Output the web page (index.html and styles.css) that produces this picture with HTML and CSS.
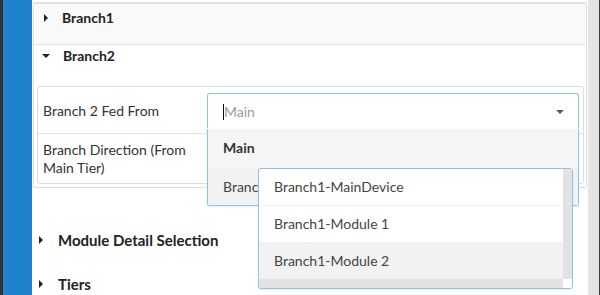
FILE: index.html
```html
<!DOCTYPE html>
<html lang="en">
  <head>
    <meta charset="UTF-8" />
    <meta name="viewport" content="width=device-width, initial-scale=1.0" />
    <title>Branch Setup</title>
    <link rel="stylesheet" href="styles.css">
  </head>
  <body>
    <div class="page">
      <div class="sidebar"></div>

      <div class="content">
        <div class="accordion">
          <div class="acc-head closed">
            <span class="caret-right"></span>Branch1
          </div>
          <div class="acc-head open">
            <span class="caret-down"></span>Branch2
          </div>
          <div class="acc-body">
            <div class="fields">
              <div class="field-row">
                <div class="field-label">Branch 2 Fed From</div>
                <div class="field-value">
                  <!-- Open select with its option list -->
                  <div class="select open">
                    <span class="cursor"></span><span class="placeholder">Main</span>
                    <span class="select-caret"></span>
                    <div class="select-menu">
                      <div class="option selected">Main</div>
                      <div class="option hovered">Branch1</div>
                      <!-- Sub menu for Branch1 -->
                      <div class="sub-menu">
                        <div class="sub-list">
                          <div class="option">Branch1-MainDevice</div>
                          <div class="option">Branch1-Module 1</div>
                          <div class="option hovered">Branch1-Module 2</div>
                        </div>
                        <div class="vscroll"></div>
                        <div class="hscroll"></div>
                        <div class="corner"></div>
                      </div>
                    </div>
                  </div>
                </div>
              </div>
              <div class="field-row tall">
                <div class="field-label">Branch Direction (From Main Tier)</div>
                <div class="field-value"></div>
              </div>
            </div>
          </div>
        </div>

        <div class="section">
          <span class="caret-right"></span>Module Detail Selection
        </div>
        <div class="section">
          <span class="caret-right"></span>Tiers
        </div>
      </div>

      <div class="scrollbar"></div>
    </div>
  </body>
</html>
```

FILE: styles.css
```css
body {
  font-family: Lato, "Open Sans", Arial, sans-serif;
  margin: 0;
  background-color: #fff;
  color: #333;
  overflow: hidden;
}
.page {
  display: flex;
  height: 295px;
  width: 600px;
}
.sidebar {
  width: 29px;
  flex-shrink: 0;
  background-color: #1e82cf;
  border-left: 3px solid #333;
}
.content {
  flex: 1;
  padding-top: 2px;
}
.scrollbar {
  width: 11px;
  flex-shrink: 0;
  background-color: #e4e4e4;
  border-right: 1px solid #3a3a3a;
}
.accordion {
  margin: 0 1px;
  border: 1px solid #dedede;
  border-top: 2px solid #e2e2e2;
  border-radius: 2px;
  padding-bottom: 3px;
}
.acc-head {
  height: 41px;
  box-sizing: border-box;
  padding: 6px 0 0 10px;
  font-size: 14px;
  font-weight: bold;
  color: #222;
  display: flex;
  align-items: flex-start;
  line-height: 16px;
}
.acc-head.closed {
  background-color: #f9f9f9;
  border-bottom: 1px solid #e4e4e4;
}
.acc-head.open {
  padding-top: 3px;
}
.acc-head .caret-right {
  margin: 4px 14px 0 0;
}
.acc-head .caret-down {
  margin: 6px 13px 0 -2px;
}
.caret-right {
  display: inline-block;
  width: 0;
  height: 0;
  border-top: 4px solid transparent;
  border-bottom: 4px solid transparent;
  border-left: 4px solid #222;
}
.caret-down {
  display: inline-block;
  width: 0;
  height: 0;
  border-left: 4px solid transparent;
  border-right: 4px solid transparent;
  border-top: 4px solid #222;
}
.acc-body {
  padding: 0 2px 0 3px;
}
.fields {
  border: 1px solid #dcdcdc;
  border-radius: 3px;
}
.field-row {
  display: flex;
  height: 46px;
  border-bottom: 1px solid #e2e2e2;
}
.field-row.tall {
  height: 49px;
  border-bottom: none;
}
.field-label {
  width: 164px;
  padding: 1px 0 0 5px;
  font-size: 14px;
  line-height: 18px;
  color: #333;
  align-self: center;
}
.field-value {
  flex: 1;
  padding: 6px 4px 0 0;
}
.select {
  position: relative;
  height: 35px;
  box-sizing: border-box;
  border: 1px solid #8cc5df;
  border-bottom: none;
  border-radius: 3px 3px 0 0;
  background: #fff;
  display: flex;
  align-items: center;
  padding: 1px 0 0 15px;
  font-size: 14px;
}
.cursor {
  width: 1px;
  height: 16px;
  background-color: #111;
}
.placeholder {
  color: #999;
}
.select-caret {
  margin-left: auto;
  margin-right: 14px;
  width: 0;
  height: 0;
  border-left: 4px solid transparent;
  border-right: 4px solid transparent;
  border-top: 4px solid #555;
}
.select-menu {
  position: absolute;
  top: 35px;
  left: -1px;
  right: -1px;
  border: 1px solid #8cc5df;
  border-top: none;
  border-radius: 0 0 3px 3px;
  background: #fff;
  box-shadow: 0 1px 2px rgba(0, 0, 0, 0.08);
}
.option {
  height: 37px;
  box-sizing: border-box;
  line-height: 37px;
  padding-left: 15px;
  font-size: 14px;
  color: #444;
  white-space: nowrap;
}
.option.selected {
  height: 39px;
  line-height: 38px;
  font-weight: bold;
  color: #333;
  background-color: #f5f5f5;
}
.option.hovered {
  background-color: #f2f2f2;
}
.sub-menu {
  position: absolute;
  top: 39px;
  left: 50px;
  width: 315px;
  height: 121px;
  box-sizing: border-box;
  border: 1px solid #8cc5df;
  border-radius: 3px;
  background: #fff;
  display: grid;
  grid-template-columns: 1fr 9px;
  grid-template-rows: 110px 10px;
  overflow: hidden;
  box-shadow: 0 1px 2px rgba(0, 0, 0, 0.08);
}
.sub-list .option {
  line-height: 36px;
  border-bottom: 1px solid #f3f3f3;
}
.sub-list .option:last-child {
  border-bottom: none;
}
.vscroll {
  background-color: #e2e2e2;
}
.hscroll {
  background-color: #e2e2e2;
}
.corner {
  background-color: #fff;
}
.section {
  display: flex;
  align-items: center;
  height: 44px;
  font-size: 15px;
  font-weight: bold;
  color: #222;
  padding-left: 7px;
  margin-top: 30px;
}
.section + .section {
  margin-top: 0;
}
.section .caret-right {
  margin-right: 15px;
}
```
